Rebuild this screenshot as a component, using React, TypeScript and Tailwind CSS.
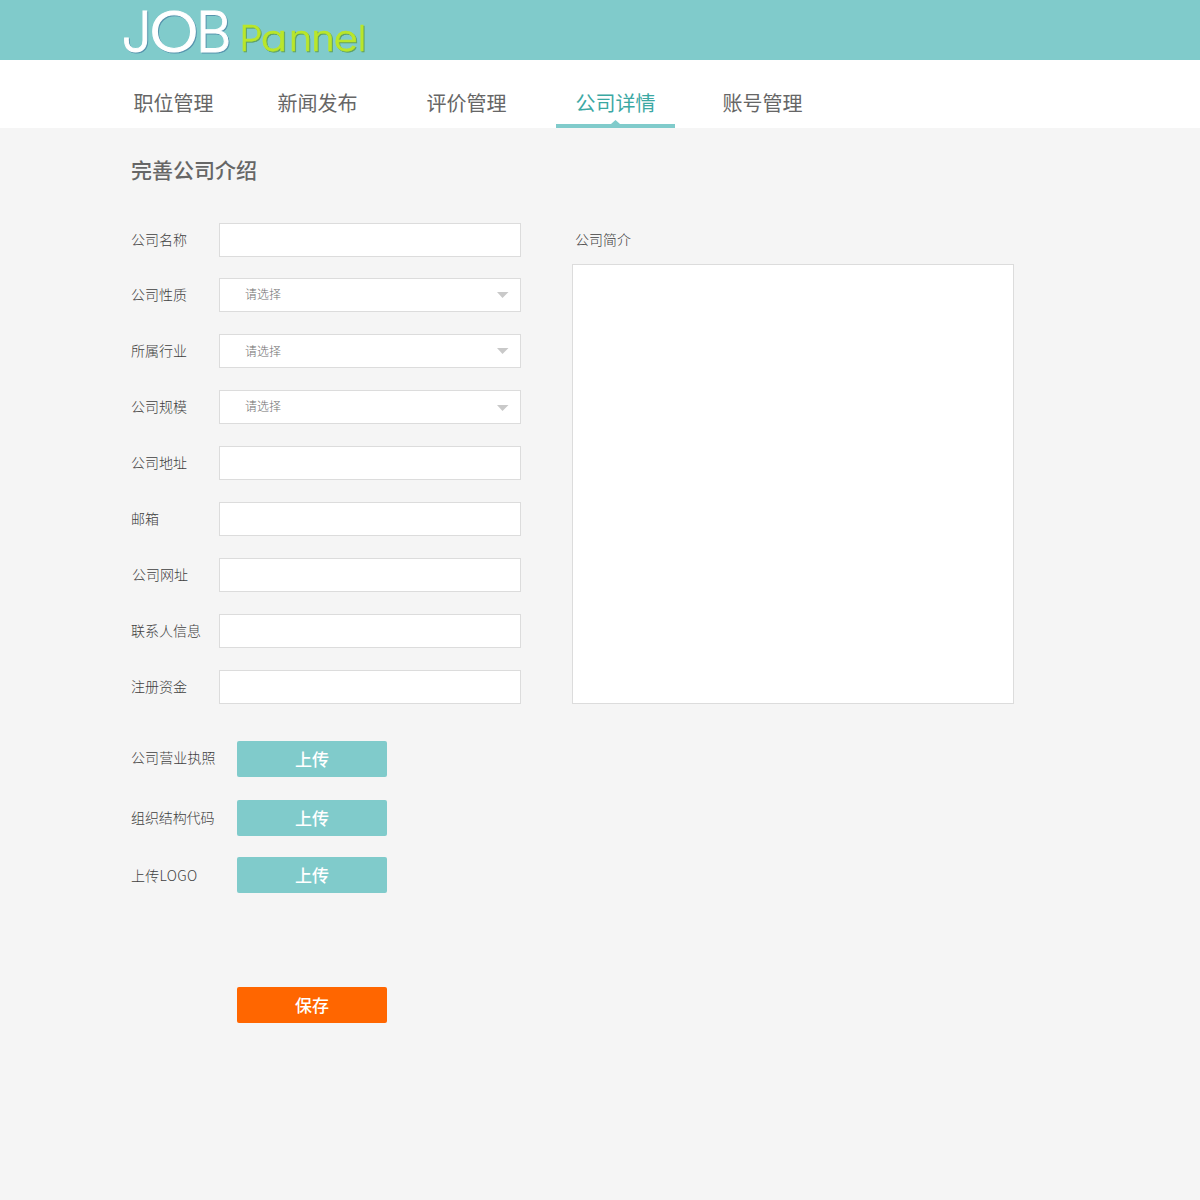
import React from 'react';

const tabs = [
  { label: '职位管理', cls: 'ml-[114px] w-[119px] text-[#666]' },
  { label: '新闻发布', cls: 'ml-[25px] w-[119px] text-[#666]' },
  { label: '评价管理', cls: 'ml-[30px] w-[119px] text-[#666]' },
  { label: '公司详情', cls: 'ml-[30px] w-[119px] text-[#3ba8a3]', active: true },
  { label: '账号管理', cls: 'ml-[28px] w-[119px] text-[#666]' },
];

const fields = [
  { label: '公司名称', cls: 'mb-[21px]' },
  { label: '公司性质', cls: 'mb-[22px]', select: true, shift: 'pb-[2px]', arrow: '' },
  { label: '所属行业', cls: 'mb-[22px]', select: true, shift: '', arrow: '' },
  { label: '公司规模', cls: 'mb-[22px]', select: true, shift: 'pb-[2px]', arrow: 'mt-[2px]' },
  { label: '公司地址', cls: 'mb-[22px]' },
  { label: '邮箱', cls: 'mb-[22px]' },
  { label: '公司网址', cls: 'mb-[22px]', pad: 'pl-px' },
  { label: '联系人信息', cls: 'mb-[22px]' },
  { label: '注册资金', cls: '' },
];

const uploads = [
  { label: '公司营业执照', cls: 'mt-[37px]', text: 'pb-[4px] tracking-[0.1px]' },
  { label: '组织结构代码', cls: 'mt-[23px]', text: 'pb-[2px] tracking-[-0.1px]' },
  { label: '上传LOGO', cls: 'mt-[21px]', text: 'tracking-[0.3px]' },
];

type Glyph = { c: string; x: number; w: number };

const job: Glyph[] = [
  { c: 'J', x: 121.5, w: 30 },
  { c: 'O', x: 148.6, w: 51 },
  { c: 'B', x: 196, w: 35.5 },
];

const pannel: Glyph[] = [
  { c: 'P', x: 239.5, w: 23 },
  { c: 'a', x: 260.6, w: 27 },
  { c: 'n', x: 288.8, w: 23.5 },
  { c: 'n', x: 311.3, w: 23.5 },
  { c: 'e', x: 333.5, w: 24.5 },
  { c: 'l', x: 358, w: 8 },
];

function Word({ glyphs, y, color, weight }: { glyphs: Glyph[]; y: number; color: string; weight: number }) {
  return (
    <text fill={color} stroke={color} strokeWidth={weight}>
      {glyphs.map((g, i) => (
        <tspan key={i} x={g.x} y={y} textLength={g.w} lengthAdjust="spacingAndGlyphs">{g.c}</tspan>
      ))}
    </text>
  );
}

function Logo() {
  return (
    <svg width="275" height="60" viewBox="105 0 275 60" className="ml-[105px] block overflow-visible font-['Inter',sans-serif] [font-feature-settings:'cv11']" aria-label="JOB Pannel">
      <g fontSize="56" fontWeight="300" className="[filter:drop-shadow(1px_1px_0.5px_#5794ad)]">
        <Word glyphs={job} y={51.8} color="#fff" weight={1} />
      </g>
      <g fontSize="36" fontWeight="300" className="[filter:drop-shadow(1px_1px_0.4px_#5d9f63)]">
        <Word glyphs={pannel} y={51} color="#b9e62b" weight={0.6} />
      </g>
    </svg>
  );
}

export default function App() {
  return (
    <div className="min-h-[1200px] w-[1200px] bg-[#f5f5f5] font-['Noto_Sans_CJK_SC',sans-serif] text-[#666]">
      <header className="h-[60px] bg-[#80cbcb]">
        <Logo />
      </header>
      <nav className="flex h-[68px] bg-white">
        {tabs.map((t) => (
          <div key={t.label} className={`flex flex-col items-center text-[20px] ${t.cls}`}>
            <span className="mt-[28px] h-[32px] leading-[30px]">{t.label}</span>
            {t.active && (
              <svg width="119" height="8" className="block" fill="#80cbcb">
                <path d="M0 4H55L59.5 0L64 4H119V8H0Z" />
              </svg>
            )}
          </div>
        ))}
      </nav>
      <main className="pl-[131px]">
        <h1 className="pt-[25px] text-[21px] leading-[32px] font-medium">完善公司介绍</h1>
        <div className="mt-[38px] flex">
          <div className="w-[390px]">
            {fields.map((f) => (
              <div key={f.label} className={`flex h-[34px] items-center ${f.cls}`}>
                <label className={`w-[88px] pb-[2px] text-[14px] leading-[20px] font-light text-[#404040] ${f.pad ?? ''}`}>{f.label}</label>
                <div className="flex h-[34px] w-[302px] items-center justify-between border border-[#dcdcdc] bg-white pr-[11px] pl-[25px]">
                  {f.select && (
                    <>
                      <span className={`text-[12px] leading-[18px] font-light text-[#707070] ${f.shift}`}>请选择</span>
                      <svg width="12" height="6" fill="#c9c9c9" className={f.arrow}><path d="M0 0H11.5L5.5 6Z" /></svg>
                    </>
                  )}
                </div>
              </div>
            ))}
          </div>
          <div className="ml-[51px]">
            <label className="block h-[41px] pl-[3px] text-[14px] leading-[32px] font-light text-[#404040]">公司简介</label>
            <div className="h-[440px] w-[442px] border border-[#dcdcdc] bg-white" />
          </div>
        </div>
        {uploads.map((u) => (
          <div key={u.label} className={`flex h-[36px] items-center ${u.cls}`}>
            <span className={`w-[106px] text-[14px] leading-[20px] font-light whitespace-nowrap text-[#404040] ${u.text}`}>{u.label}</span>
            <button className="h-[36px] w-[150px] rounded-[2px] bg-[#80cbcb] text-[17px] leading-[36px] font-medium text-white">上传</button>
          </div>
        ))}
        <button className="mt-[94px] ml-[106px] block h-[36px] w-[150px] rounded-[2px] bg-[#ff6600] text-[17px] leading-[36px] font-medium text-white">保存</button>
      </main>
    </div>
  );
}
